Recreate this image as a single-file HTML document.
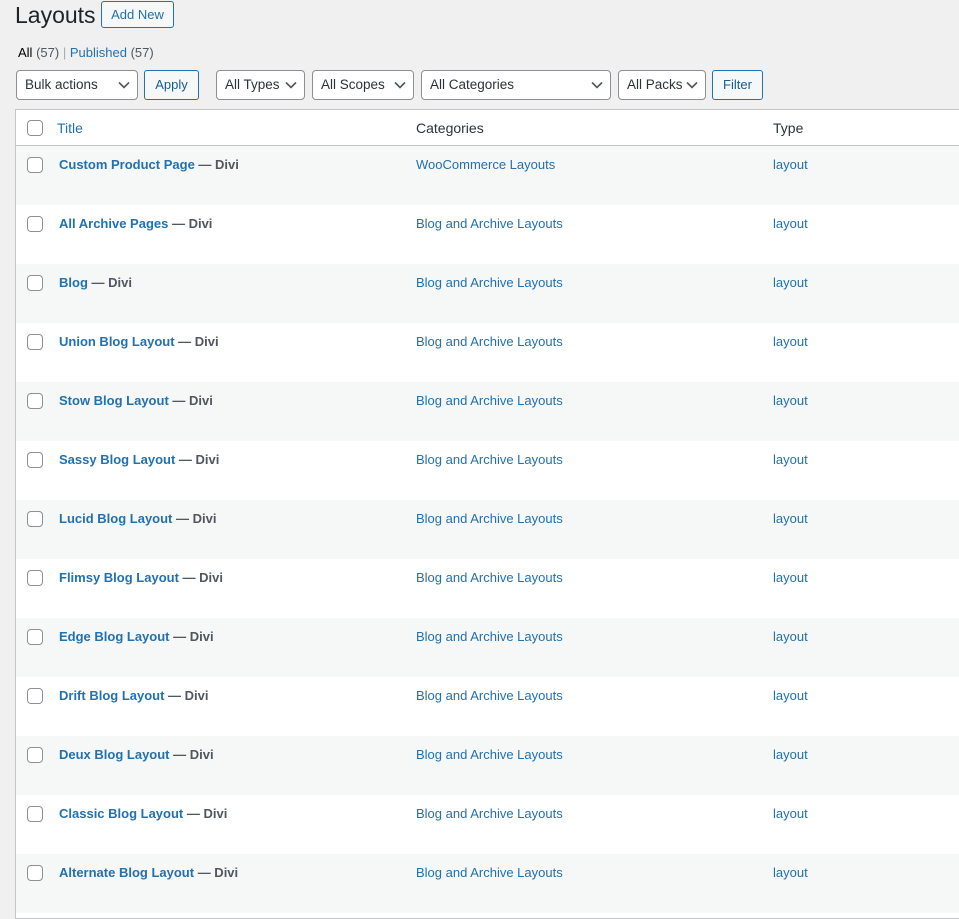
<!DOCTYPE html>
<html><head><meta charset="utf-8"><style>
*{box-sizing:border-box;margin:0;padding:0}
body{width:959px;height:905px;overflow:hidden;background:#f0f0f1;font-family:"Liberation Sans",sans-serif;color:#3c434a;font-size:13px;position:relative}
.abs{position:absolute}
h1{position:absolute;left:15px;top:0;font-size:23px;font-weight:400;color:#1d2327;line-height:30px}
.addnew{left:101px;top:1px;height:27px;width:73px;border:1px solid #2271b1;border-radius:3px;color:#2271b1;font-size:13px;line-height:25px;text-align:center;background:#f6f7f7}
.subs{left:18px;top:44px;font-size:13px;line-height:17px}
.subs b{color:#000;font-weight:400}
.subs a{color:#2271b1;text-decoration:none}
.sel{height:30px;top:70px;border:1px solid #8c8f94;border-radius:4px;background:#fff;color:#2c3338;font-size:13.5px;line-height:28px;padding-left:8px}
.sel svg{position:absolute;right:7px;top:10px}
.btn{height:30px;top:70px;border:1px solid #2271b1;border-radius:3px;background:#f6f7f7;color:#135e96;font-size:13px;line-height:28px;text-align:center}
.table{left:15px;top:109px;width:960px;height:810px;border:1px solid #c3c4c7;border-right:none;background:#fff}
.hdr{position:absolute;left:0;top:0;width:100%;height:36px;border-bottom:1px solid #c3c4c7;font-size:14px;color:#2c3338}
.cb{position:absolute;width:16px;height:16px;border:1px solid #8c8f94;border-radius:4px;background:#fff;left:11px}
.row{position:absolute;left:0;width:100%;height:59px}
.row.g{background:#f6f7f7}
.t{position:absolute;left:43px;top:11px;font-size:13px;font-weight:700;color:#2271b1}
.t span{color:#50575e}
.c{position:absolute;left:400px;top:11px;color:#2271b1;font-size:13px}
.y{position:absolute;left:757px;top:11px;color:#2271b1;font-size:13px}
</style></head><body>
<h1>Layouts</h1>
<div class="abs addnew">Add New</div>
<div class="abs subs"><b>All</b> <span style="color:#50575e">(57)</span> <span style="color:#a7aaad">|</span> <a>Published <span style="color:#50575e">(57)</span></a></div>

<div class="abs sel" style="left:16px;width:122px">Bulk actions<svg width="12" height="8" viewBox="0 0 12 8"><path d="M1 1.5l5 5 5-5" fill="none" stroke="#50575e" stroke-width="1.6"/></svg></div>
<div class="abs btn" style="left:144px;width:55px">Apply</div>
<div class="abs sel" style="left:216px;width:89px">All Types<svg width="12" height="8" viewBox="0 0 12 8"><path d="M1 1.5l5 5 5-5" fill="none" stroke="#50575e" stroke-width="1.6"/></svg></div>
<div class="abs sel" style="left:312px;width:102px">All Scopes<svg width="12" height="8" viewBox="0 0 12 8"><path d="M1 1.5l5 5 5-5" fill="none" stroke="#50575e" stroke-width="1.6"/></svg></div>
<div class="abs sel" style="left:421px;width:190px">All Categories<svg width="12" height="8" viewBox="0 0 12 8"><path d="M1 1.5l5 5 5-5" fill="none" stroke="#50575e" stroke-width="1.6"/></svg></div>
<div class="abs sel" style="left:618px;width:88px">All Packs<svg width="12" height="8" viewBox="0 0 12 8"><path d="M1 1.5l5 5 5-5" fill="none" stroke="#50575e" stroke-width="1.6"/></svg></div>
<div class="abs btn" style="left:712px;width:51px">Filter</div>

<div class="abs table">
<div class="hdr">
<div class="cb" style="top:10px"></div>
<div class="abs" style="left:41px;top:10px;color:#2271b1">Title</div>
<div class="abs" style="left:400px;top:10px">Categories</div>
<div class="abs" style="left:757px;top:10px">Type</div>
</div>
<div class="row g" style="top:36px"><div class="cb" style="top:11px"></div><div class="t">Custom Product Page <span>— Divi</span></div><div class="c">WooCommerce Layouts</div><div class="y">layout</div></div>
<div class="row" style="top:95px"><div class="cb" style="top:11px"></div><div class="t">All Archive Pages <span>— Divi</span></div><div class="c">Blog and Archive Layouts</div><div class="y">layout</div></div>
<div class="row g" style="top:154px"><div class="cb" style="top:11px"></div><div class="t">Blog <span>— Divi</span></div><div class="c">Blog and Archive Layouts</div><div class="y">layout</div></div>
<div class="row" style="top:213px"><div class="cb" style="top:11px"></div><div class="t">Union Blog Layout <span>— Divi</span></div><div class="c">Blog and Archive Layouts</div><div class="y">layout</div></div>
<div class="row g" style="top:272px"><div class="cb" style="top:11px"></div><div class="t">Stow Blog Layout <span>— Divi</span></div><div class="c">Blog and Archive Layouts</div><div class="y">layout</div></div>
<div class="row" style="top:331px"><div class="cb" style="top:11px"></div><div class="t">Sassy Blog Layout <span>— Divi</span></div><div class="c">Blog and Archive Layouts</div><div class="y">layout</div></div>
<div class="row g" style="top:390px"><div class="cb" style="top:11px"></div><div class="t">Lucid Blog Layout <span>— Divi</span></div><div class="c">Blog and Archive Layouts</div><div class="y">layout</div></div>
<div class="row" style="top:449px"><div class="cb" style="top:11px"></div><div class="t">Flimsy Blog Layout <span>— Divi</span></div><div class="c">Blog and Archive Layouts</div><div class="y">layout</div></div>
<div class="row g" style="top:508px"><div class="cb" style="top:11px"></div><div class="t">Edge Blog Layout <span>— Divi</span></div><div class="c">Blog and Archive Layouts</div><div class="y">layout</div></div>
<div class="row" style="top:567px"><div class="cb" style="top:11px"></div><div class="t">Drift Blog Layout <span>— Divi</span></div><div class="c">Blog and Archive Layouts</div><div class="y">layout</div></div>
<div class="row g" style="top:626px"><div class="cb" style="top:11px"></div><div class="t">Deux Blog Layout <span>— Divi</span></div><div class="c">Blog and Archive Layouts</div><div class="y">layout</div></div>
<div class="row" style="top:685px"><div class="cb" style="top:11px"></div><div class="t">Classic Blog Layout <span>— Divi</span></div><div class="c">Blog and Archive Layouts</div><div class="y">layout</div></div>
<div class="row g" style="top:744px"><div class="cb" style="top:11px"></div><div class="t">Alternate Blog Layout <span>— Divi</span></div><div class="c">Blog and Archive Layouts</div><div class="y">layout</div></div>
</div>
</body></html>
